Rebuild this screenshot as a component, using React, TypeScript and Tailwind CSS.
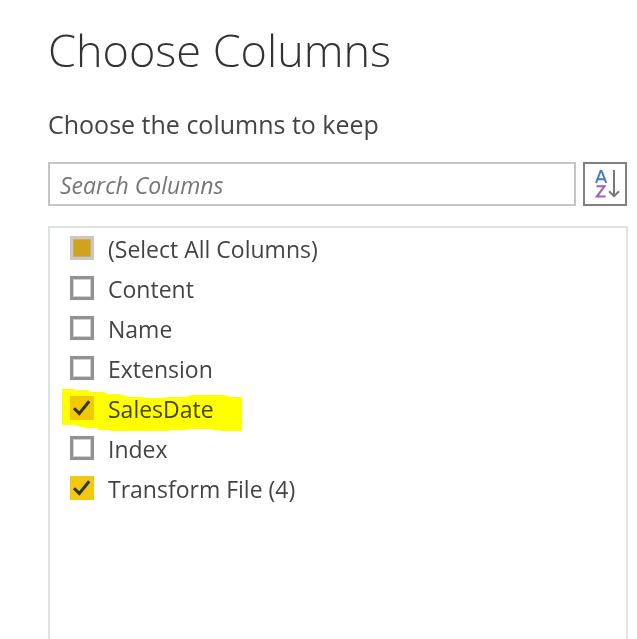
import { useState } from "react";

type Column = { name: string; checked: boolean; marked?: boolean };

const initialColumns: Column[] = [
  { name: "Content", checked: false },
  { name: "Name", checked: false },
  { name: "Extension", checked: false },
  { name: "SalesDate", checked: true, marked: true },
  { name: "Index", checked: false },
  { name: "Transform File (4)", checked: true },
];

type BoxProps = {
  label: string;
  checked: boolean;
  partial?: boolean;
  marked?: boolean;
  onChange: () => void;
};

function CheckRow({ label, checked, partial = false, marked = false, onChange }: BoxProps) {
  const look = partial
    ? "border-[3px] border-[#c8c8c8] bg-[#cea41f] shadow-[inset_0_0_0_1px_#d0b04a]"
    : checked
      ? "bg-[#f2c811]"
      : "border-[3px] border-[#929292] bg-white shadow-[inset_0_0_0_1px_#d0d0d0]";
  return (
    <li className="relative h-10">
      <label className="flex h-10 items-center gap-[14px] pl-5">
        <span className="grid size-6 shrink-0">
          <input
            type="checkbox"
            checked={checked}
            ref={(el) => {
              if (el) el.indeterminate = partial;
            }}
            onChange={onChange}
            className={`col-start-1 row-start-1 size-6 appearance-none ${look}`}
          />
          {checked && !partial && (
            <svg viewBox="0 0 24 24" className="pointer-events-none col-start-1 row-start-1 size-6" fill="none" stroke="#333" strokeWidth="3">
              <path d="M4 12.2 9.3 17.4 19.2 5.2" />
            </svg>
          )}
        </span>
        <span className="pt-0.5 text-[23px] leading-8">{label}</span>
      </label>
      {marked && (
        <svg
          viewBox="0 0 180 43"
          className="pointer-events-none absolute top-px left-3 h-[43px] w-[180px] mix-blend-multiply"
          fill="#ffff00"
          aria-hidden="true"
        >
          <path d="M0 0H13V1H26L29 3H41L46 5H57L66 8H78L88 9H97L108 8H124L130 6H163L168 8H180V42H159L154 41H150V40H128L120 41H107V42H48V41H37L34 39H25L20 38L12 36H0Z" />
        </svg>
      )}
    </li>
  );
}

export default function App() {
  const [columns, setColumns] = useState(initialColumns);
  const [query, setQuery] = useState("");
  const all = columns.every((c) => c.checked);
  const some = columns.some((c) => c.checked);

  const toggle = (name: string) =>
    setColumns(columns.map((c) => (c.name === name ? { ...c, checked: !c.checked } : c)));
  const toggleAll = () => setColumns(columns.map((c) => ({ ...c, checked: !all })));

  return (
    <main className="flex min-h-screen flex-col bg-white pt-5 pr-[9px] pl-12 font-['Open_Sans','Noto_Sans',sans-serif] text-[#444]">
      <h1 className="text-[45px] leading-[60px] font-light text-[#333]">Choose Columns</h1>
      <p className="mt-7 text-[25px] leading-8">Choose the columns to keep</p>
      <div className="mt-[22px] flex gap-[7px] pr-px">
        <input
          type="search"
          aria-label="Search Columns"
          placeholder="Search Columns"
          value={query}
          onChange={(e) => setQuery(e.target.value)}
          className="h-11 min-w-0 flex-1 border-2 border-[#c6c6c6] px-[10px] pt-0.5 text-[23px] placeholder:text-[#767676] placeholder:italic"
        />
        <button type="button" aria-label="Sort columns A to Z" className="grid size-11 shrink-0 place-items-center border-2 border-[#808080]">
          <svg viewBox="0 0 40 40" className="size-10" fill="none">
            <path d="M11 19 15.6 7H16.6L21.2 19M12.6 15.2H19.6" stroke="#3f7fbf" strokeWidth="2" />
            <path d="M11.5 22.2H19.6L11.8 32.6H20.6" stroke="#9b62b8" strokeWidth="2" />
            <path d="M29 6V32M24 27.3 29 32.2 34 27.3" stroke="#777" strokeWidth="2" />
          </svg>
        </button>
      </div>
      <ul className="mt-5 flex-1 border-2 border-b-0 border-[#dde2e7]">
        <CheckRow label="(Select All Columns)" checked={all} partial={some && !all} onChange={toggleAll} />
        {columns
          .filter((c) => c.name.toLowerCase().includes(query.toLowerCase()))
          .map((c) => (
            <CheckRow key={c.name} label={c.name} checked={c.checked} marked={c.marked} onChange={() => toggle(c.name)} />
          ))}
      </ul>
    </main>
  );
}
